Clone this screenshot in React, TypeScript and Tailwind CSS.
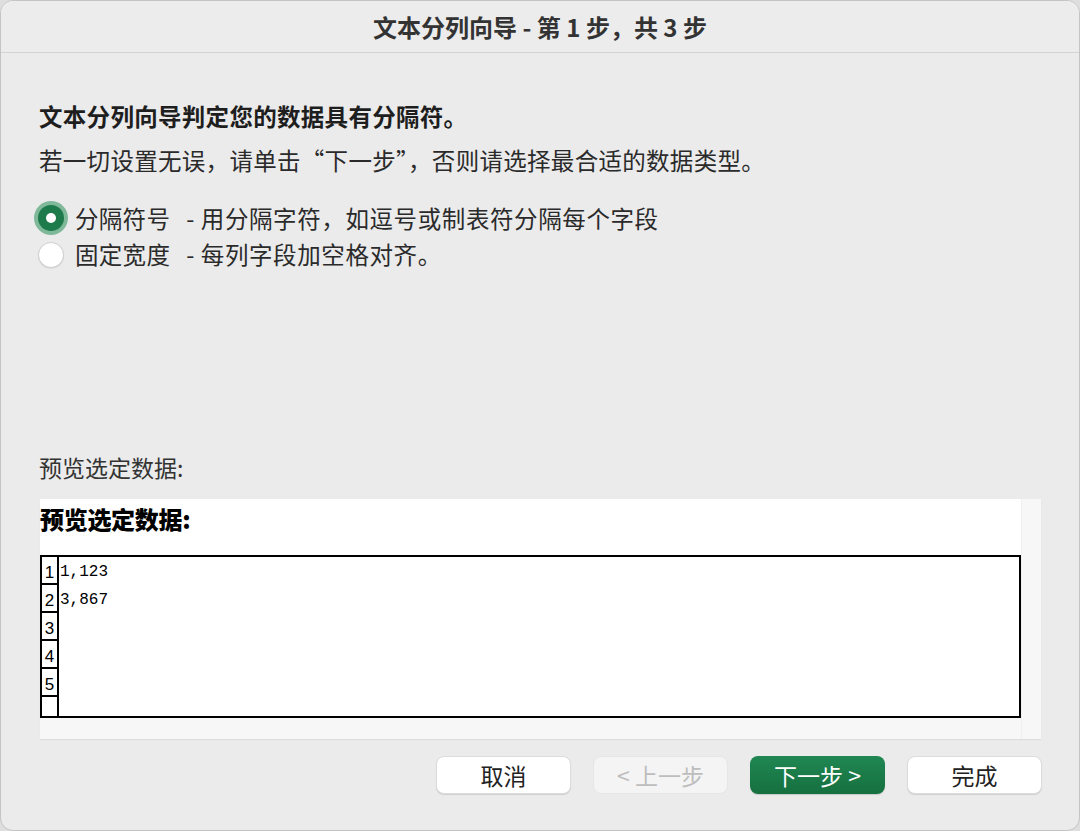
import React from 'react';

const cjk = "font-['PingFang_SC','Noto_Sans_CJK_SC',sans-serif]";

const App: React.FC = () => {
  const rows = ['1', '2', '3', '4', '5'];
  const data = ['1,123', '3,867'];

  return (
    <div className={`w-[1080px] h-[831px] bg-[#dedede] ${cjk}`}>
      <div className="w-full h-full rounded-[13px] border border-[#c4c4c4] bg-[#ebebeb] flex flex-col overflow-hidden">
        {/* Title bar */}
        <div className="h-[52px] shrink-0 border-b border-[#d3d3d3] bg-[#ececec] flex items-center justify-center">
          <span className="text-[24px] font-bold text-[#333333] leading-[30px]">
            文本分列向导 - 第 1 步，共 3 步
          </span>
        </div>

        <div className="flex flex-col px-[38px] pt-[48px] tracking-[0.3px]">
          <p className="text-[23.5px] leading-[30px] font-bold text-[#1e1e1e]">
            文本分列向导判定您的数据具有分隔符。
          </p>
          <p className="mt-[14px] text-[23.5px] leading-[30px] text-[#2a2a2a]">
            若一切设置无误，请单击“下一步”，否则请选择最合适的数据类型。
          </p>

          {/* Radios */}
          <div className="mt-[25px] flex flex-col">
            <div className="h-[36px] flex items-center">
              <div className="w-[34px] h-[34px] -ml-[5px] rounded-full bg-[#80b99a] flex items-center justify-center">
                <div className="w-[26px] h-[26px] rounded-full bg-[#1c7a4b] flex items-center justify-center">
                  <div className="w-[10px] h-[10px] rounded-full bg-white" />
                </div>
              </div>
              <span className="ml-[7px] text-[23.5px] leading-[30px] text-[#2a2a2a]">分隔符号</span>
              <span className="ml-[16px] text-[23.5px] leading-[30px] text-[#2a2a2a] tracking-[0.6px]">
                - 用分隔字符，如逗号或制表符分隔每个字段
              </span>
            </div>
            <div className="h-[36px] flex items-center">
              <div className="w-[26px] h-[26px] -ml-[1px] mt-[2px] rounded-full bg-white border border-[#d0d0d0] shadow-[0_0.5px_1px_rgba(0,0,0,0.12)]" />
              <span className="ml-[11px] text-[23.5px] leading-[30px] text-[#2a2a2a]">固定宽度</span>
              <span className="ml-[16px] text-[23.5px] leading-[30px] text-[#2a2a2a] tracking-[0.6px]">
                - 每列字段加空格对齐。
              </span>
            </div>
          </div>

          <p className="mt-[180px] text-[23px] leading-[30px] text-[#333333] tracking-normal">预览选定数据:</p>
        </div>

        {/* Preview box */}
        <div className="mt-[17px] ml-[39px] w-[1001px] h-[240px] flex bg-[#f7f7f7] shadow-[0_1px_1px_rgba(0,0,0,0.06)]">
          <div className="w-[981px] flex flex-col">
            <div className="h-[219px] bg-white flex flex-col">
              <p className="pt-[5px] text-[24px] leading-[30px] font-extrabold text-black tracking-[-0.3px]">
                预览选定数据:
              </p>
              <div className="mt-[21px] w-[981px] h-[163px] border-2 border-black flex">
                <div className="w-[17px] border-r-2 border-black flex flex-col">
                  {rows.map(r => (
                    <div
                      key={r}
                      className="h-[28px] border-b-2 border-black flex items-end justify-center font-['Liberation_Sans',sans-serif] text-[17px] leading-[20px] text-black"
                    >
                      {r}
                    </div>
                  ))}
                </div>
                <div className="flex-1 flex flex-col">
                  {data.map(d => (
                    <div
                      key={d}
                      className="h-[28px] pl-[1px] pt-[5px] font-['Liberation_Mono',monospace] text-[16px] leading-[20px] text-black"
                    >
                      {d}
                    </div>
                  ))}
                </div>
              </div>
            </div>
          </div>
          <div className="flex-1 border-l border-[#efefef]" />
        </div>

        {/* Buttons */}
        <div className="mt-[17px] pr-[37px] flex justify-end gap-[22px]">
          <button className="w-[135px] h-[38px] rounded-[8px] bg-white border border-[#dcdcdc] shadow-[0_1px_1px_rgba(0,0,0,0.12)] text-[23px] text-[#222222]">
            取消
          </button>
          <button className="w-[135px] h-[38px] rounded-[8px] bg-[#f4f4f4] border border-[#e6e6e6] text-[23px] text-[#bdbdbd]">
            &lt; 上一步
          </button>
          <button className="w-[135px] h-[38px] rounded-[8px] bg-gradient-to-b from-[#1f8753] to-[#16703f] shadow-[0_1px_1px_rgba(0,0,0,0.15)] text-[23px] text-white">
            下一步 &gt;
          </button>
          <button className="w-[135px] h-[38px] rounded-[8px] bg-white border border-[#dcdcdc] shadow-[0_1px_1px_rgba(0,0,0,0.12)] text-[23px] text-[#222222]">
            完成
          </button>
        </div>
      </div>
    </div>
  );
};

export default App;
